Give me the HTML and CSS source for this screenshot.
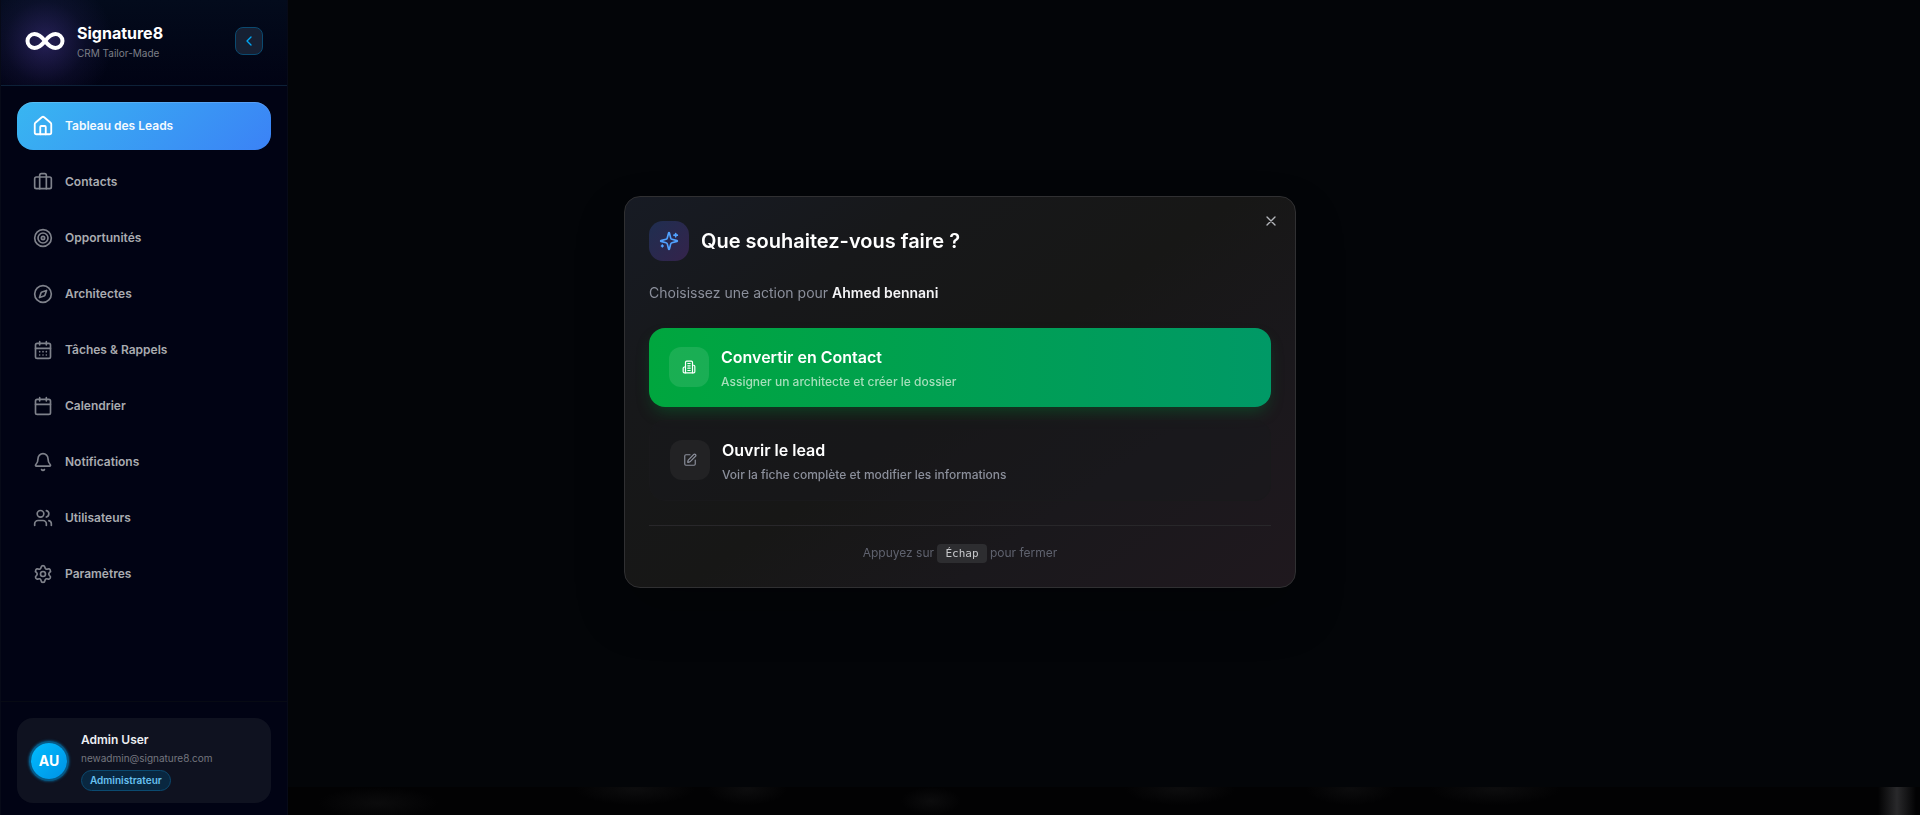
FILE: index.html
```html
<!DOCTYPE html>
<html lang="fr">
<head>
    <meta charset="UTF-8">
    <meta name="viewport" content="width=device-width, initial-scale=1.0">
    <title>Signature8 - Tableau des Leads</title>
    <link rel="stylesheet" href="styles.css">
</head>
<body>
<div class="layout">
    <aside class="sidebar">
        <div class="sidebar-header">
            <svg class="logo" viewBox="0 0 40 20" fill="none" stroke="currentColor" stroke-width="4" stroke-linecap="round" stroke-linejoin="round">
                <path d="M20 10C16.500 5.500 14 3 9.500 3a7 7 0 0 0 0 14C14 17 16.500 14.500 20 10S26 3 30.500 3a7 7 0 0 1 0 14C26 17 23.500 14.500 20 10z"/>
            </svg>
            <div class="brand">
                <div class="brand-name">Signature8</div>
                <div class="brand-tagline">CRM Tailor-Made</div>
            </div>
            <button type="button" class="collapse" aria-label="Réduire le menu">
                <svg class="icon" viewBox="0 0 24 24"><path d="m15 18-6-6 6-6"/></svg>
            </button>
        </div>

        <nav class="nav">
            <a href="#" class="nav-item active">
                <svg class="icon" viewBox="0 0 24 24"><path d="M15 21v-8a1 1 0 0 0-1-1h-4a1 1 0 0 0-1 1v8"/><path d="M3 10a2 2 0 0 1 .709-1.528l7-5.999a2 2 0 0 1 2.582 0l7 5.999A2 2 0 0 1 21 10v9a2 2 0 0 1-2 2H5a2 2 0 0 1-2-2z"/></svg>
                <span>Tableau des Leads</span>
            </a>
            <a href="#" class="nav-item">
                <svg class="icon" viewBox="0 0 24 24"><path d="M16 20V4a2 2 0 0 0-2-2h-4a2 2 0 0 0-2 2v16"/><rect width="20" height="14" x="2" y="6" rx="2"/></svg>
                <span>Contacts</span>
            </a>
            <a href="#" class="nav-item">
                <svg class="icon" viewBox="0 0 24 24"><circle cx="12" cy="12" r="10"/><circle cx="12" cy="12" r="6"/><circle cx="12" cy="12" r="2"/></svg>
                <span>Opportunités</span>
            </a>
            <a href="#" class="nav-item">
                <svg class="icon" viewBox="0 0 24 24"><path d="m16.240 7.760-1.804 5.411a2 2 0 0 1-1.265 1.265L7.760 16.240l1.804-5.411a2 2 0 0 1 1.265-1.265z"/><circle cx="12" cy="12" r="10"/></svg>
                <span>Architectes</span>
            </a>
            <a href="#" class="nav-item">
                <svg class="icon" viewBox="0 0 24 24"><path d="M8 2v4M16 2v4"/><rect width="18" height="18" x="3" y="4" rx="2"/><path d="M3 10h18M8 14h.01M12 14h.01M16 14h.01M8 18h.01M12 18h.01M16 18h.01"/></svg>
                <span>Tâches &amp; Rappels</span>
            </a>
            <a href="#" class="nav-item">
                <svg class="icon" viewBox="0 0 24 24"><path d="M8 2v4M16 2v4"/><rect width="18" height="18" x="3" y="4" rx="2"/><path d="M3 10h18"/></svg>
                <span>Calendrier</span>
            </a>
            <a href="#" class="nav-item">
                <svg class="icon" viewBox="0 0 24 24"><path d="M10.268 21a2 2 0 0 0 3.464 0"/><path d="M3.262 15.326A1 1 0 0 0 4 17h16a1 1 0 0 0 .740-1.673C19.410 13.956 18 12.499 18 8A6 6 0 0 0 6 8c0 4.499-1.411 5.956-2.738 7.326"/></svg>
                <span>Notifications</span>
            </a>
            <a href="#" class="nav-item">
                <svg class="icon" viewBox="0 0 24 24"><path d="M16 21v-2a4 4 0 0 0-4-4H6a4 4 0 0 0-4 4v2"/><circle cx="9" cy="7" r="4"/><path d="M22 21v-2a4 4 0 0 0-3-3.870M16 3.130a4 4 0 0 1 0 7.750"/></svg>
                <span>Utilisateurs</span>
            </a>
            <a href="#" class="nav-item">
                <svg class="icon" viewBox="0 0 24 24"><path d="M9.671 4.136a2.340 2.340 0 0 1 4.659 0 2.340 2.340 0 0 0 3.319 1.915 2.340 2.340 0 0 1 2.330 4.033 2.340 2.340 0 0 0 0 3.831 2.340 2.340 0 0 1-2.330 4.033 2.340 2.340 0 0 0-3.319 1.915 2.340 2.340 0 0 1-4.659 0 2.340 2.340 0 0 0-3.320-1.915 2.340 2.340 0 0 1-2.330-4.033 2.340 2.340 0 0 0 0-3.831A2.340 2.340 0 0 1 6.350 6.051a2.340 2.340 0 0 0 3.319-1.915"/><circle cx="12" cy="12" r="3"/></svg>
                <span>Paramètres</span>
            </a>
        </nav>

        <div class="sidebar-footer">
            <div class="user-card">
                <div class="avatar">AU</div>
                <div class="user-info">
                    <div class="user-name">Admin User</div>
                    <div class="user-email">newadmin@signature8.com</div>
                    <span class="role">Administrateur</span>
                </div>
            </div>
        </div>
    </aside>

    <main class="content">
        <div class="board-edge"></div>
    </main>
</div>

<div class="overlay">
    <div class="modal" role="dialog" aria-modal="true" aria-labelledby="modalTitle">
        <button type="button" class="close" aria-label="Fermer">
            <svg class="icon" viewBox="0 0 24 24"><path d="M18 6 6 18M6 6l12 12"/></svg>
        </button>
        <div class="modal-header">
            <div class="modal-icon">
                <svg class="icon" viewBox="0 0 24 24"><path d="M9.937 15.500A2 2 0 0 0 8.500 14.063l-6.135-1.582a.5.5 0 0 1 0-.962L8.500 9.936A2 2 0 0 0 9.937 8.500l1.582-6.135a.5.5 0 0 1 .963 0L14.063 8.500A2 2 0 0 0 15.500 9.937l6.135 1.581a.5.5 0 0 1 0 .964L15.500 14.063a2 2 0 0 0-1.437 1.437l-1.582 6.135a.5.5 0 0 1-.963 0z"/><path d="M20 3v4M22 5h-4M4 17v2M5 18H3"/></svg>
            </div>
            <h2 id="modalTitle">Que souhaitez-vous faire ?</h2>
        </div>
        <p class="modal-text">Choisissez une action pour <strong>Ahmed bennani</strong></p>

        <div class="actions">
            <button type="button" class="action primary">
                <span class="action-icon">
                    <svg class="icon" viewBox="0 0 24 24"><path d="M6 22V4a2 2 0 0 1 2-2h8a2 2 0 0 1 2 2v18Z"/><path d="M6 12H4a2 2 0 0 0-2 2v6a2 2 0 0 0 2 2h2M18 9h2a2 2 0 0 1 2 2v9a2 2 0 0 1-2 2h-2M10 6h4M10 10h4M10 14h4M10 18h4"/></svg>
                </span>
                <span class="action-body">
                    <span class="action-title">Convertir en Contact</span>
                    <span class="action-text">Assigner un architecte et créer le dossier</span>
                </span>
            </button>
            <button type="button" class="action secondary">
                <span class="action-icon">
                    <svg class="icon" viewBox="0 0 24 24"><path d="M12 3H5a2 2 0 0 0-2 2v14a2 2 0 0 0 2 2h14a2 2 0 0 0 2-2v-7"/><path d="M18.375 2.625a1 1 0 0 1 3 3l-9.013 9.014a2 2 0 0 1-.853.505l-2.873.840a.5.5 0 0 1-.620-.620l.840-2.873a2 2 0 0 1 .506-.852z"/></svg>
                </span>
                <span class="action-body">
                    <span class="action-title">Ouvrir le lead</span>
                    <span class="action-text">Voir la fiche complète et modifier les informations</span>
                </span>
            </button>
        </div>

        <div class="modal-footer">Appuyez sur <kbd>Échap</kbd> pour fermer</div>
    </div>
</div>
</body>
</html>
```
FILE: styles.css
```css
* {
    box-sizing: border-box;
}
body {
    margin: 0;
    font-family: Inter, sans-serif;
    font-size: 14px;
    background: #030508;
    color: #fff;
}
button {
    font-family: inherit;
    color: inherit;
    border: none;
    padding: 0;
    cursor: pointer;
}
.icon {
    display: block;
    width: 20px;
    height: 20px;
    flex-shrink: 0;
    fill: none;
    stroke: currentColor;
    stroke-width: 2;
    stroke-linecap: round;
    stroke-linejoin: round;
}
.layout {
    display: flex;
    min-height: 100vh;
}

/* sidebar */
.sidebar {
    width: 288px;
    flex-shrink: 0;
    display: flex;
    flex-direction: column;
    background: #010314;
    border: 1px solid #070a18;
    border-width: 0 1px;
}
.sidebar-header {
    display: flex;
    align-items: center;
    gap: 12px;
    height: 86px;
    padding: 0 24px 4px;
    border-bottom: 1px solid #0d2138;
    background:
        radial-gradient(circle 68px at 44px 42px, rgba(80, 62, 160, 0.45), rgba(60, 50, 130, 0.14) 60%, transparent),
        linear-gradient(#030b1c, #010314);
}
.logo {
    width: 40px;
    height: 20px;
}
.brand {
    flex: 1;
    padding-top: 2px;
}
.brand-name {
    font-size: 16px;
    line-height: 20px;
    font-weight: 700;
}
.brand-tagline {
    margin-top: 2px;
    font-size: 10px;
    line-height: 16px;
    color: #7c7f88;
}
.collapse {
    display: flex;
    align-items: center;
    justify-content: center;
    width: 28px;
    height: 28px;
    border: 1px solid #0b4a70;
    border-radius: 8px;
    background: #172033;
    color: #00a6f4;
}
.collapse .icon {
    width: 16px;
    height: 16px;
}
.nav {
    flex: 1;
    display: flex;
    flex-direction: column;
    gap: 8px;
    padding: 16px;
}
.nav-item {
    display: flex;
    align-items: center;
    gap: 12px;
    height: 48px;
    padding: 0 16px;
    border-radius: 16px;
    color: #a9abb0;
    font-size: 12px;
    line-height: 16px;
    font-weight: 600;
    text-decoration: none;
}
.nav-item .icon {
    color: #7f828b;
    stroke-width: 2;
}
.nav-item.active {
    background: linear-gradient(135deg, #38b6f1, #3b82f6);
    box-shadow: inset 0 1px 0 rgba(255, 255, 255, 0.15);
    color: #f4faff;
}
.nav-item.active .icon {
    color: #fff;
    transform: scale(1.1);
}
.sidebar-footer {
    padding: 16px 16px 12px;
    border-top: 1px solid #070a14;
}
.user-card {
    display: flex;
    align-items: center;
    gap: 14px;
    padding: 12px 14px;
    border-radius: 16px;
    background: #0f1220;
}
.avatar {
    display: flex;
    align-items: center;
    justify-content: center;
    width: 36px;
    height: 36px;
    border-radius: 50%;
    background: linear-gradient(135deg, #00bcff, #0092e4);
    box-shadow: 0 0 0 2px #075985, 0 0 2px 3px #0a4163;
    font-size: 14px;
    font-weight: 700;
}
.user-name {
    font-size: 12px;
    line-height: 20px;
    font-weight: 600;
    color: #eceef2;
}
.user-email {
    font-size: 10px;
    line-height: 16px;
    color: #74767f;
}
.role {
    display: block;
    width: fit-content;
    margin-top: 4px;
    padding: 0 8px;
    border: 1px solid #0b4a70;
    border-radius: 11px;
    background: #092740;
    color: #68c0f0;
    font-size: 10px;
    line-height: 19px;
    font-weight: 600;
}

/* content behind the dialog */
.content {
    flex: 1;
    display: flex;
    flex-direction: column;
    justify-content: flex-end;
}
.board-edge {
    height: 28px;
    background:
        linear-gradient(90deg, transparent, #29292b 50%, transparent) right 4px top / 38px 100% no-repeat,
        radial-gradient(closest-side, #0b0b0c, transparent) 2% 0 / 120px 32px no-repeat,
        radial-gradient(closest-side, #0d0d0e, transparent) 19% -14px / 120px 32px no-repeat,
        radial-gradient(closest-side, #0d0d0e, transparent) 27% -14px / 80px 32px no-repeat,
        radial-gradient(closest-side, #0c0c0d, transparent) 39% 0 / 60px 28px no-repeat,
        radial-gradient(closest-side, #0d0d0e, transparent) 55% -14px / 110px 32px no-repeat,
        radial-gradient(closest-side, #0c0c0d, transparent) 66% -14px / 90px 32px no-repeat,
        radial-gradient(closest-side, #0d0d0e, transparent) 76% -14px / 130px 32px no-repeat,
        #020203;
}

/* dialog */
.overlay {
    position: fixed;
    inset: 0;
    display: flex;
    align-items: center;
    justify-content: center;
    padding: 0 16px 32px;
}
.modal {
    position: relative;
    width: 100%;
    max-width: 672px;
    padding: 24px;
    border: 1px solid #303032;
    border-radius: 16px;
    background: linear-gradient(145deg, #171b24, #17181a 25%, #171716 50%, #1a181c 72%, #1f181e);
    box-shadow: 0 24px 48px rgba(0, 0, 0, 0.25);
}
.close {
    position: absolute;
    top: 16px;
    right: 16px;
    padding: 0;
    background: none;
    color: #b4b6bb;
}
.close .icon {
    width: 16px;
    height: 16px;
}
.modal-header {
    display: flex;
    align-items: center;
    gap: 12px;
}
.modal-icon {
    display: flex;
    align-items: center;
    justify-content: center;
    width: 40px;
    height: 40px;
    border-radius: 14px;
    background: linear-gradient(135deg, #1f2e50, #34234b);
    color: #51a2ff;
}
.modal h2 {
    margin: 0;
    font-size: 20px;
    line-height: 28px;
    font-weight: 600;
}
.modal-text {
    margin: 20px 0 24px;
    font-size: 14px;
    line-height: 23px;
    color: #8b8f9b;
}
.modal-text strong {
    font-weight: 600;
    color: #f4f4f6;
}
.actions {
    display: flex;
    flex-direction: column;
    gap: 13px;
}
.action {
    display: flex;
    align-items: center;
    gap: 12px;
    padding: 16px 20px;
    border-radius: 16px;
    text-align: left;
}
.action.primary {
    background: linear-gradient(90deg, #00a63e, #009966);
    box-shadow: 0 8px 16px -4px rgba(0, 130, 54, 0.4);
}
.action.secondary {
    border: 1px solid #19191b;
    background: #17181b80;
}
.action-icon {
    display: flex;
    align-items: center;
    justify-content: center;
    width: 40px;
    height: 40px;
    border-radius: 12px;
    background: rgba(255, 255, 255, 0.1);
}
.action-icon .icon {
    width: 14px;
    height: 14px;
}
.secondary .action-icon {
    background: #222224;
    color: #8b8f9b;
}
.action-body {
    display: flex;
    flex-direction: column;
    gap: 3px;
}
.action-title {
    font-size: 16px;
    line-height: 26px;
    font-weight: 600;
}
.action-text {
    font-size: 12px;
    line-height: 18px;
    font-weight: 500;
    color: #a6dfbb;
}
.secondary .action-text {
    color: #8b8f9b;
}
.modal-footer {
    margin-top: 24px;
    padding-top: 17px;
    border-top: 1px solid #28272a;
    font-size: 12px;
    line-height: 19px;
    text-align: center;
    color: #5f626e;
}
.modal-footer kbd {
    display: inline-block;
    padding: 0 8px;
    border-radius: 4px;
    background: #2d2d30;
    color: #c8c9cc;
    font-family: "DejaVu Sans Mono", monospace;
    font-size: 11px;
}
```
